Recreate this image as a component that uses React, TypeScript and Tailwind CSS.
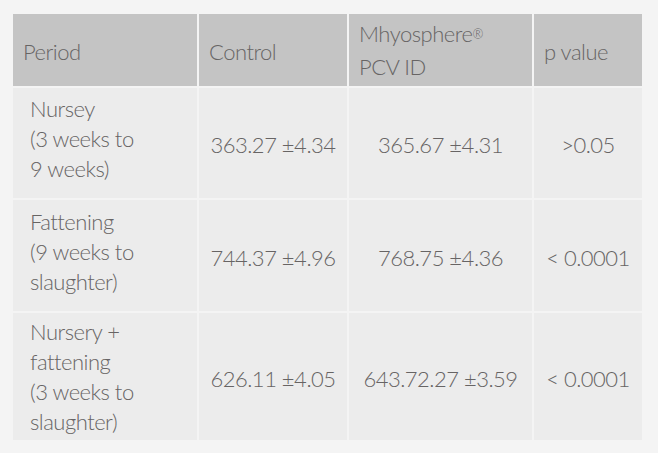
const rows = [
  { period: ["Nursey", "(3 weeks to", "9 weeks)"], control: "363.27 ±4.34", mhyo: "365.67 ±4.31", p: ">0.05", h: "h-[112px]", pb: "pb-[8px]" },
  { period: ["Fattening", "(9 weeks to", "slaughter)"], control: "744.37 ±4.96", mhyo: "768.75 ±4.36", p: "< 0.0001", h: "h-[113px]", pb: "pb-[8px]" },
  { period: ["Nursery +", "fattening", "(3 weeks to", "slaughter)"], control: "626.11 ±4.05", mhyo: "643.72.27 ±3.59", p: "< 0.0001", h: "h-[129px]", pb: "pb-0" },
];

export default function App() {
  return (
    <div className="min-h-screen w-[658px] h-[453px] bg-[#f4f4f4] pt-[14px] pl-[13px] font-['Lato',sans-serif] font-light text-[22px] tracking-[-0.5px] leading-[30px] text-[#676464]">
      <table className="w-[629px] border-collapse table-fixed">
        <colgroup>
          <col className="w-[185px]" />
          <col className="w-[150px]" />
          <col className="w-[185px]" />
          <col className="w-[109px]" />
        </colgroup>
        <thead>
          <tr className="h-[73px] bg-[#c4c4c4]">
            <th className="border-2 border-[#f4f4f4] border-t-0 border-l-0 text-left font-light px-[10px] pt-1">Period</th>
            <th className="border-2 border-[#f4f4f4] border-t-0 text-left font-light px-[10px] pt-1">Control</th>
            <th className="border-2 border-[#f4f4f4] border-t-0 text-left font-light px-[10px] leading-[33px]">
              Mhyosphere<sup className="text-[13px] relative -top-[3px]">®</sup>
              <br />
              PCV ID
            </th>
            <th className="border-2 border-[#f4f4f4] border-t-0 border-r-0 text-left font-light px-[10px] pt-1">p value</th>
          </tr>
        </thead>
        <tbody>
          {rows.map((r, i) => (
            <tr key={i} className={`${r.h} bg-[#ececec]`}>
              <td className={`border-2 border-[#f4f4f4] border-l-0 pl-[17px] pr-2 ${r.pb}`}>
                {r.period.map((l, j) => (
                  <div key={j}>{l}</div>
                ))}
              </td>
              <td className="border-2 border-[#f4f4f4] text-center pt-1">{r.control}</td>
              <td className="border-2 border-[#f4f4f4] text-center pt-1">{r.mhyo}</td>
              <td className="border-2 border-[#f4f4f4] border-r-0 text-center pt-1">{r.p}</td>
            </tr>
          ))}
        </tbody>
      </table>
    </div>
  );
}
